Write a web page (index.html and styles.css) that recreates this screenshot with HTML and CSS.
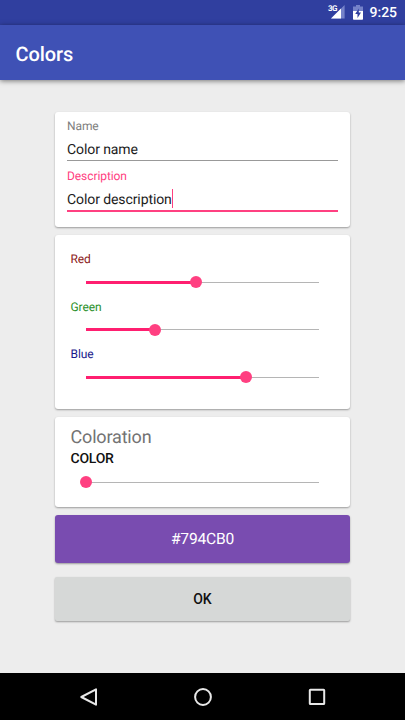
FILE: index.html
```html
<!DOCTYPE html>
<html lang="en">
<head>
<meta charset="utf-8">
<title>Colors</title>
<link rel="stylesheet" href="styles.css">
</head>
<body>
<div class="status">
  <span class="network">3G</span>
  <svg class="signal" width="14" height="14" viewBox="0 0 14 14"><path d="M13.6 0V13.6H0z" fill="#7582c9"/><path d="M10 3.6V13.6H0z" fill="#fff"/></svg>
  <svg class="battery" width="10" height="15" viewBox="0 0 10 15"><path d="M3 0h4v1.6h3V7H0V1.6h3z" fill="#7582c9"/><path d="M0 6h10v8a.8.8 0 0 1-.8.8H.8A.8.8 0 0 1 0 14z" fill="#fff"/><path d="M5.8 3.5L2.2 9h2.3v4L8 7.5H5.8z" fill="#303f9f"/></svg>
  <span class="clock">9:25</span>
</div>
<header class="appbar"><h1>Colors</h1></header>
<main class="content">
  <section class="card fields">
    <div class="field"><label>Name</label><div class="value"><span>Color name</span></div></div>
    <div class="field active"><label>Description</label><div class="value"><span>Color description</span><i class="caret"></i></div></div>
  </section>
  <section class="card channels">
    <div class="channel red"><label>Red</label><div class="slider"><div class="fill" style="width:110px"></div><div class="thumb"></div><div class="rest"></div></div></div>
    <div class="channel green"><label>Green</label><div class="slider"><div class="fill" style="width:69px"></div><div class="thumb"></div><div class="rest"></div></div></div>
    <div class="channel blue"><label>Blue</label><div class="slider"><div class="fill" style="width:160px"></div><div class="thumb"></div><div class="rest"></div></div></div>
  </section>
  <section class="card coloration">
    <h2>Coloration</h2>
    <h3>COLOR</h3>
    <div class="slider"><div class="fill" style="width:0px"></div><div class="thumb"></div><div class="rest"></div></div>
  </section>
  <section class="card swatch"><span>#794CB0</span></section>
  <button class="ok"><span>OK</span></button>
</main>
<nav class="navbar">
  <svg width="20" height="20" viewBox="0 0 20 20"><path d="M17 2.3v15.4L2.3 10z"/></svg>
  <svg width="20" height="20" viewBox="0 0 20 20"><circle cx="10" cy="10" r="7.9"/></svg>
  <svg width="20" height="20" viewBox="0 0 20 20"><rect x="2.8" y="2.7" width="14.4" height="14.4" rx=".6"/></svg>
</nav>
</body>
</html>
```
FILE: styles.css
```css
* { box-sizing: border-box; }
body {
  margin: 0;
  width: 405px;
  height: 720px;
  display: flex;
  flex-direction: column;
  overflow: hidden;
  background: #ededed;
  font-family: Roboto, "Liberation Sans", sans-serif;
  text-rendering: geometricPrecision;
}
h1, h2, h3 { margin: 0; font-weight: 400; }

.status {
  height: 25px;
  flex: none;
  display: flex;
  align-items: flex-start;
  padding-left: 328px;
  background: #303f9f;
  color: #fff;
}
.network { width: 9px; margin-top: 4px; font-size: 8px; line-height: 9px; font-weight: 700; letter-spacing: -.5px; }
.signal { flex: none; margin: 5px 0 0 -6px; }
.battery { flex: none; margin: 5px 0 0 8px; }
.clock { margin: 4px 0 0 6.5px; font-size: 14px; line-height: 18px; font-weight: 500; }

.appbar {
  height: 55px;
  flex: none;
  display: flex;
  align-items: center;
  padding: 2px 0 0 15.5px;
  background: #3f51b5;
  color: #fff;
  box-shadow: 0 1px 5px rgba(0, 0, 0, .5);
}
.appbar h1 { font-size: 20px; line-height: 24px; font-weight: 500; letter-spacing: -.1px; }

.content { flex: 1; padding: 31.5px 55px 0; }
.card {
  background: #fff;
  border-radius: 3px;
  box-shadow: 0 1px 2px rgba(0, 0, 0, .35);
}

.fields { height: 115px; padding: 7.5px 12px 0; }
.field { height: 50px; color: #808080; }
.field label { display: block; font-size: 12px; line-height: 15px; letter-spacing: -.08px; }
.value {
  height: 27px;
  display: flex;
  align-items: flex-start;
  padding-top: 7px;
  border-bottom: 1px solid #999;
  color: #1c1c1c;
  font-size: 14px;
  line-height: 18px;
  letter-spacing: -.09px;
}
.active label { color: #ff4081; }
.active .value { height: 28px; border-bottom: 2px solid #ff4081; }
.caret { width: 1.5px; height: 19px; margin-top: -2px; background: #ff4081; }

.channels { height: 173.5px; margin-top: 8.5px; padding: 16px 16px 0 15.5px; }
.channel { height: 47.5px; }
.channel label { display: block; font-size: 12px; line-height: 16px; letter-spacing: -.08px; }
.red label { color: #8b1a1a; }
.green label { color: #2a902a; }
.blue label { color: #1a1a8b; }
.slider {
  display: flex;
  align-items: center;
  width: 232.5px;
  height: 12px;
  margin: 9px 0 0 15.8px;
}
.fill { height: 3px; background: #ff1f70; }
.thumb { flex: none; width: 12px; height: 12px; margin: 0 -6px; border-radius: 50%; background: #ff4081; z-index: 1; }
.rest { flex: 1; height: 1px; background: #b5b5b5; }

.coloration { height: 89.5px; margin-top: 8.5px; padding: 10px 16px 0 15.5px; }
.coloration h2 { color: #737373; font-size: 18px; line-height: 22px; letter-spacing: -.17px; }
.coloration h3 { color: #111; font-size: 14px; line-height: 20px; font-weight: 500; letter-spacing: -.25px; }
.coloration .slider { margin-top: 7px; }

.swatch {
  height: 48.5px;
  margin-top: 8px;
  display: flex;
  align-items: center;
  justify-content: center;
  padding-top: 1px;
  background: #794cb0;
  color: #fff;
  font-size: 15.6px;
  letter-spacing: -.2px;
}
.ok {
  display: block;
  width: 295.5px;
  height: 44px;
  margin: 14px 0 0 -.4px;
  padding: 0;
  border: 0;
  border-radius: 2px;
  background: #d6d8d7;
  color: #111;
  font: 500 14px/20px Roboto, sans-serif;
  letter-spacing: -.2px;
  box-shadow: 0 1px 2px rgba(0, 0, 0, .35);
}

.navbar {
  height: 47px;
  flex: none;
  display: flex;
  align-items: center;
  justify-content: center;
  gap: 94px;
  background: #000;
}
.navbar svg { fill: none; stroke: #e8e8e8; stroke-width: 2; stroke-linejoin: round; }
```
